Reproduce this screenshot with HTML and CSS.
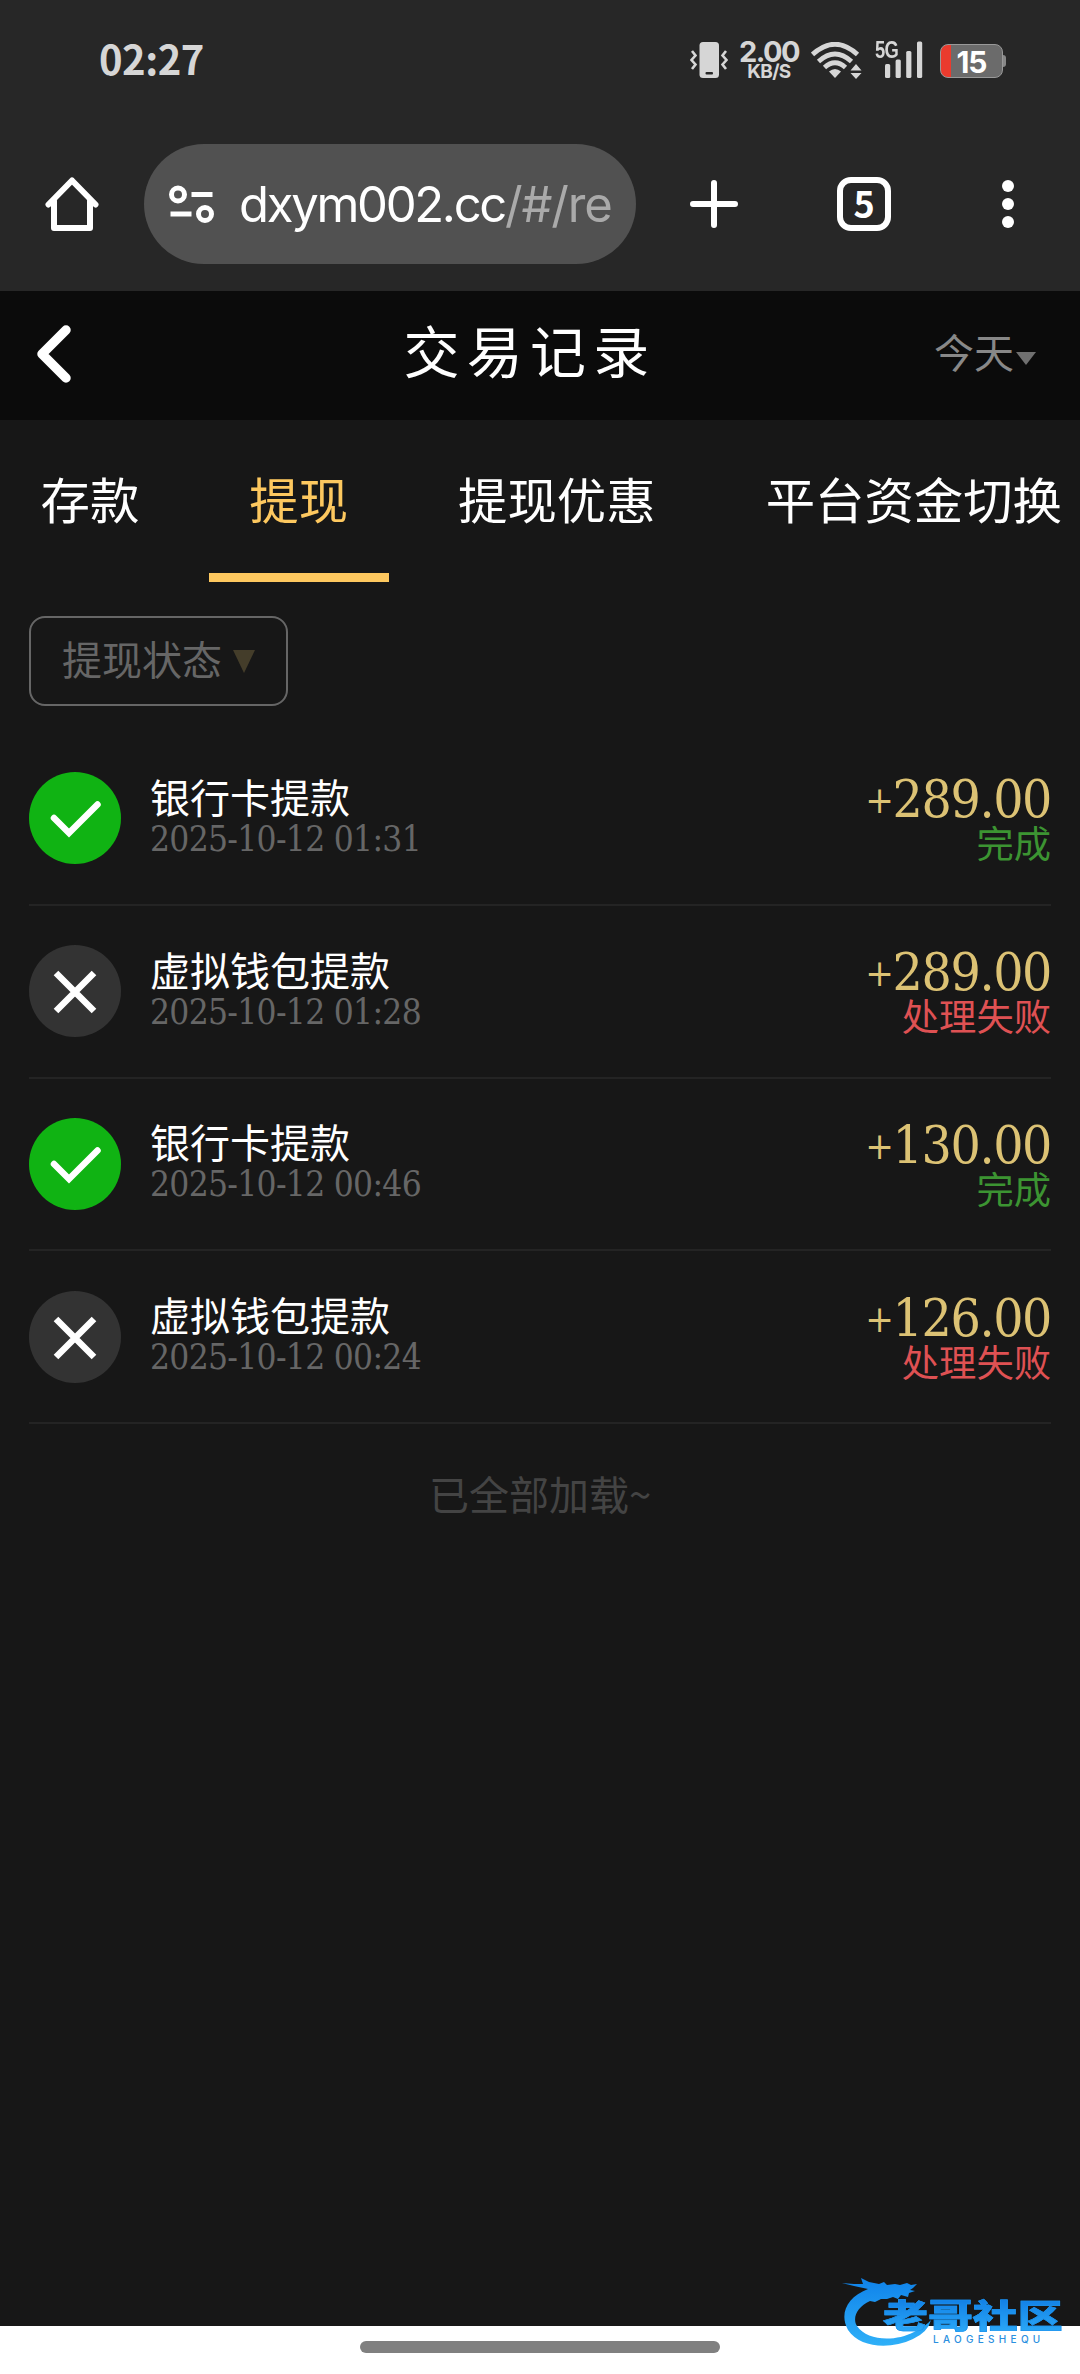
FILE: index.html
```html
<!DOCTYPE html>
<html lang="zh-CN">
<head>
    <meta charset="UTF-8">
    <title>交易记录</title>
    <meta name="viewport" content="width=device-width, initial-scale=1.0">
    <link rel="stylesheet" href="styles.css">
</head>
<body>
<div class="status-bar">
    <div class="clock">02:27</div>
    <svg class="icon-vibrate" width="38" height="36" viewBox="0 0 38 36">
        <rect x="9.5" y="0" width="19.5" height="36" rx="3.5" fill="#d6d6d6"/>
        <rect x="15.5" y="30" width="7.5" height="2.6" rx="1" fill="#272727"/>
        <path d="M2 9l3.5 4.5L1.5 18l4 4.5L2 27M36 9l-3.5 4.5 4 4.5-4 4.5L36 27" fill="none" stroke="#d6d6d6" stroke-width="2.6"/>
    </svg>
    <div class="net-speed">
        <span class="speed-num">2.00</span>
        <span class="speed-unit">KB/S</span>
    </div>
    <svg class="icon-wifi" width="51" height="38" viewBox="0 0 51 38">
        <g fill="none" stroke="#d6d6d6" stroke-width="4.8">
            <path d="M1.5 12.5Q24 -8 46.5 12.5"/>
            <path d="M7.5 19.5Q24 4.5 40.5 19.5"/>
            <path d="M13.5 25.5Q24 16 34.5 25.5"/>
        </g>
        <path d="M18 29.5Q24 24.5 30 29.5L24 36z" fill="#d6d6d6"/>
        <path d="M39.5 28.5L45 22l5.5 6.5zM39.5 31L45 37l5.5-6z" fill="#d6d6d6"/>
    </svg>
    <div class="signal">
        <span class="signal-label">5G</span>
        <svg width="38" height="37" viewBox="0 0 38 37" fill="#d6d6d6">
            <rect x="0" y="23" width="5.2" height="14" rx="1.5"/>
            <rect x="10.6" y="18.5" width="5.2" height="18.5" rx="1.5"/>
            <rect x="21.2" y="10" width="5.2" height="27" rx="1.5"/>
            <rect x="32" y="0.5" width="5.2" height="36.5" rx="1.5"/>
        </svg>
    </div>
    <div class="battery">15</div>
</div>

<div class="browser-bar">
    <svg class="icon-home" width="54" height="54" viewBox="0 0 54 54" fill="none" stroke="#fff" stroke-width="6" stroke-linecap="round" stroke-linejoin="round">
        <path d="M3.5 27.5L27 3.5l23.5 24"/>
        <path d="M9 24v27h36V24"/>
    </svg>
    <div class="url">
        <svg width="46" height="39" viewBox="0 0 46 39" fill="none" stroke="#fff" stroke-width="5">
            <circle cx="9" cy="9.5" r="6.5"/>
            <path d="M22.5 9.5h21M1.5 29h21"/>
            <circle cx="36" cy="29" r="6.5"/>
        </svg>
        <div class="url-text">dxym002.cc<span>/#/re</span></div>
    </div>
    <svg class="icon-plus" width="48" height="48" viewBox="0 0 48 48" stroke="#fff" stroke-width="6" stroke-linecap="round">
        <path d="M24 3v42M3 24h42"/>
    </svg>
    <div class="tab-count">5</div>
    <svg class="icon-more" width="12" height="48" viewBox="0 0 12 48" fill="#fff">
        <circle cx="6" cy="6" r="6"/>
        <circle cx="6" cy="24" r="6"/>
        <circle cx="6" cy="42" r="6"/>
    </svg>
</div>

<header>
    <svg class="back" width="36" height="60" viewBox="0 0 36 60" fill="none" stroke="#fff" stroke-width="9.5" stroke-linecap="round" stroke-linejoin="round">
        <path d="M30 6L6 30l24 24"/>
    </svg>
    <h1>交易记录</h1>
    <div class="day">今天<i class="arrow"></i></div>
</header>

<nav>
    <a href="#">存款</a>
    <a href="#" class="active">提现</a>
    <a href="#">提现优惠</a>
    <a href="#">平台资金切换</a>
</nav>

<main>
    <div class="filter">提现状态<i class="arrow"></i></div>

    <div class="record">
        <svg class="record-icon" viewBox="0 0 92 92">
            <circle cx="46" cy="46" r="46" fill="#10b313"/>
            <path d="M25 46l15 15 28.5-28.5" fill="none" stroke="#fff" stroke-width="6.5" stroke-linecap="round"/>
        </svg>
        <div class="info">
            <div class="name">银行卡提款</div>
            <div class="time">2025-10-12 01:31</div>
        </div>
        <div class="result">
            <div class="amount"><span>+</span>289.00</div>
            <div class="state done">完成</div>
        </div>
    </div>

    <div class="record">
        <svg class="record-icon" viewBox="0 0 92 92">
            <circle cx="46" cy="46" r="46" fill="#333"/>
            <path d="M27 28l38 38M65 28L27 66" fill="none" stroke="#fff" stroke-width="6.5"/>
        </svg>
        <div class="info">
            <div class="name">虚拟钱包提款</div>
            <div class="time">2025-10-12 01:28</div>
        </div>
        <div class="result">
            <div class="amount"><span>+</span>289.00</div>
            <div class="state failed">处理失败</div>
        </div>
    </div>

    <div class="record">
        <svg class="record-icon" viewBox="0 0 92 92">
            <circle cx="46" cy="46" r="46" fill="#10b313"/>
            <path d="M25 46l15 15 28.5-28.5" fill="none" stroke="#fff" stroke-width="6.5" stroke-linecap="round"/>
        </svg>
        <div class="info">
            <div class="name">银行卡提款</div>
            <div class="time">2025-10-12 00:46</div>
        </div>
        <div class="result">
            <div class="amount"><span>+</span>130.00</div>
            <div class="state done">完成</div>
        </div>
    </div>

    <div class="record">
        <svg class="record-icon" viewBox="0 0 92 92">
            <circle cx="46" cy="46" r="46" fill="#333"/>
            <path d="M27 28l38 38M65 28L27 66" fill="none" stroke="#fff" stroke-width="6.5"/>
        </svg>
        <div class="info">
            <div class="name">虚拟钱包提款</div>
            <div class="time">2025-10-12 00:24</div>
        </div>
        <div class="result">
            <div class="amount"><span>+</span>126.00</div>
            <div class="state failed">处理失败</div>
        </div>
    </div>

    <div class="loaded">已全部加载~</div>
</main>

<div class="home-bar"><span></span></div>

<!-- Watermark over the bottom right corner -->
<div class="watermark">
    <svg width="92" height="76" viewBox="0 0 92 76">
        <defs>
            <linearGradient id="dragon" x1="0" y1="0" x2="0" y2="1">
                <stop offset="0" stop-color="#0f82ea"/>
                <stop offset="1" stop-color="#2fb0f8"/>
            </linearGradient>
        </defs>
        <path fill="url(#dragon)" d="M0 9l12 1 9 0-2-6 8 4 10 2 5-2 3 3 8-1 5 1 7-2 4 2 6-1-4 4-3 2 5 1-6 2-1 4-7-2-3 4-5-2-6 2-6 0-6 3-5-1C15 33 10 44 15 52C25 67 53 68 72 58Q84 52 89 46Q86 58 71 65C48 76 18 74 6 56C-3 40 5 23 26 15L12 12z"/>
    </svg>
    <div class="mark-name">老哥社区</div>
    <div class="mark-latin">LAOGESHEQU</div>
</div>
</body>
</html>
```
FILE: styles.css
```css
* { box-sizing: border-box; }
body { margin: 0; width: 1080px; height: 2374px; display: flex; flex-direction: column; position: relative; overflow: hidden;
    font-family: "Noto Sans CJK SC", sans-serif; background: #171717; color: #fff;
}
svg { display: block; flex: none; }

/* Phone status bar */
.status-bar { display: flex; align-items: flex-start; height: 120px; padding: 42px 77px 0 99px; background: #272727; color: #d6d6d6; flex: none; }
.clock { font-size: 40px; font-weight: bold; line-height: 33px; letter-spacing: -0.5px; margin-right: auto; }
.net-speed { display: flex; flex-direction: column; align-items: center; width: 58px; margin-left: 12px; font-family: Inter, sans-serif; font-weight: bold; }
.speed-num { font-size: 29px; line-height: 20px; letter-spacing: -1.6px; }
.speed-unit { font-size: 19px; line-height: 19px; letter-spacing: -0.7px; }
.icon-wifi { margin-left: 13px; }
.signal { display: flex; margin-left: 13px; margin-top: -1px; font-family: "Liberation Sans", sans-serif; }
.signal-label { width: 24px; font-size: 23px; line-height: 18px; font-weight: bold; letter-spacing: -1px; margin-right: -14px; transform: scaleX(0.8); transform-origin: left; }
.battery { position: relative; width: 63px; height: 34px; margin: 2px 0 0 17px; border: 1px solid #999; border-radius: 8px; background: linear-gradient(90deg, #ea3b2e 10px, #6b6b6b 10px);
    color: #fff; font: bold 30px/34px Inter, sans-serif; letter-spacing: -1px; text-align: center;
}
.battery::after { content: ""; position: absolute; right: -4px; top: 10px; width: 3px; height: 12px; border-radius: 0 3px 3px 0; background: #888; }

/* Browser toolbar */
.browser-bar { display: flex; align-items: center; height: 171px; padding: 0 66px 3px 45px; background: #272727; flex: none; }
.url { display: flex; align-items: center; width: 492px; height: 120px; margin-left: 45px; padding-left: 25px; border-radius: 60px; background: #515151; }
.url-text { margin: 2px 0 0 24px; font: 49px/60px Inter, sans-serif; letter-spacing: -2.3px; white-space: nowrap; }
.url-text span { color: #aaa; letter-spacing: -1.2px; }
.icon-plus { margin-left: 54px; }
.tab-count { width: 54px; height: 54px; margin-left: 99px; border: 6px solid #fff; border-radius: 14px; font: bold 36px/38px "Noto Sans CJK SC", sans-serif; text-align: center; }
.icon-more { margin-left: 111px; }

/* Page header */
header { display: flex; align-items: center; height: 129px; padding: 0 44px 4px 36px; background: #0b0b0b; flex: none; }
h1 { flex: 1; margin: -10px 0 0 54px; font-size: 56px; font-weight: normal; letter-spacing: 7.2px; text-align: center; }
.day { display: flex; align-items: center; margin-top: -5px; font-size: 40px; color: #888; }
.arrow { display: inline-block; border-left: 11px solid transparent; border-right: 11px solid transparent; }
.day .arrow { border-width: 13px 10px 0; border-top: 13px solid #707070; margin: 14px 0 0 2px; }

nav { display: flex; gap: 29px; height: 162px; flex: none; }
nav a { flex: none; height: 162px; padding: 0 40.5px; font-size: 49.4px; line-height: 156px; color: #fff; text-decoration: none; white-space: nowrap; }
nav .active { color: #fdc85f; border-bottom: 9px solid #fdc85f; }

main { flex: 1; padding: 34px 29px 0; }
.filter { display: flex; align-items: center; width: 259px; height: 90px; padding: 0 0 6px 31px; border: 2px solid #666; border-radius: 16px; font-size: 40px; color: #666; }
.filter .arrow { border-top: 23px solid #443d2a; margin: 6px 0 0 11px; }

.record { display: flex; align-items: center; height: 172.8px; border-bottom: 2px solid #242424; }
.filter + .record { margin-top: 27px; }
.record-icon { width: 92px; height: 92px; }
.info { margin-left: 29px; }
.name { font-size: 40px; line-height: 40px; }
.time { margin-bottom: -2px; font: 35px/47px "DejaVu Serif Condensed", "Liberation Serif", serif; letter-spacing: -0.7px; color: #666; white-space: nowrap; }
.result { margin-left: auto; text-align: right; }
.amount { font: 53px/48px "DejaVu Serif Condensed", "Liberation Serif", serif; letter-spacing: -1.4px; margin-right: 0; color: #dcc274; }
.amount span { font-size: 38px; line-height: 30px; vertical-align: 4px; }
.state { font-size: 37.3px; line-height: 38px; }
.done { color: #3c9432; }
.failed { color: #df5153; }
.loaded { margin-top: 40px; font-size: 40px; text-align: center; color: #444; }

.home-bar { height: 48px; padding-top: 15px; background: #fff; flex: none; }
.home-bar span { display: block; width: 360px; height: 12px; margin: 0 auto; border-radius: 6px; background: #808080; }

.watermark { position: absolute; left: 842px; top: 2274px; width: 222px; height: 76px; }
.mark-name { position: absolute; left: 41px; top: 22px; font-size: 33px; font-weight: 900; line-height: 36px; white-space: nowrap; transform: scaleX(1.36); transform-origin: left;
    color: transparent; background: linear-gradient(#0f7ce4, #2ba8f6); background-clip: text; -webkit-background-clip: text; -webkit-text-stroke: 0.6px #1c92ee;
}
.mark-latin { position: absolute; left: 91px; top: 59px; font: 500 10px/12px Inter, sans-serif; letter-spacing: 4.3px; color: #2a8fe0; }
```
